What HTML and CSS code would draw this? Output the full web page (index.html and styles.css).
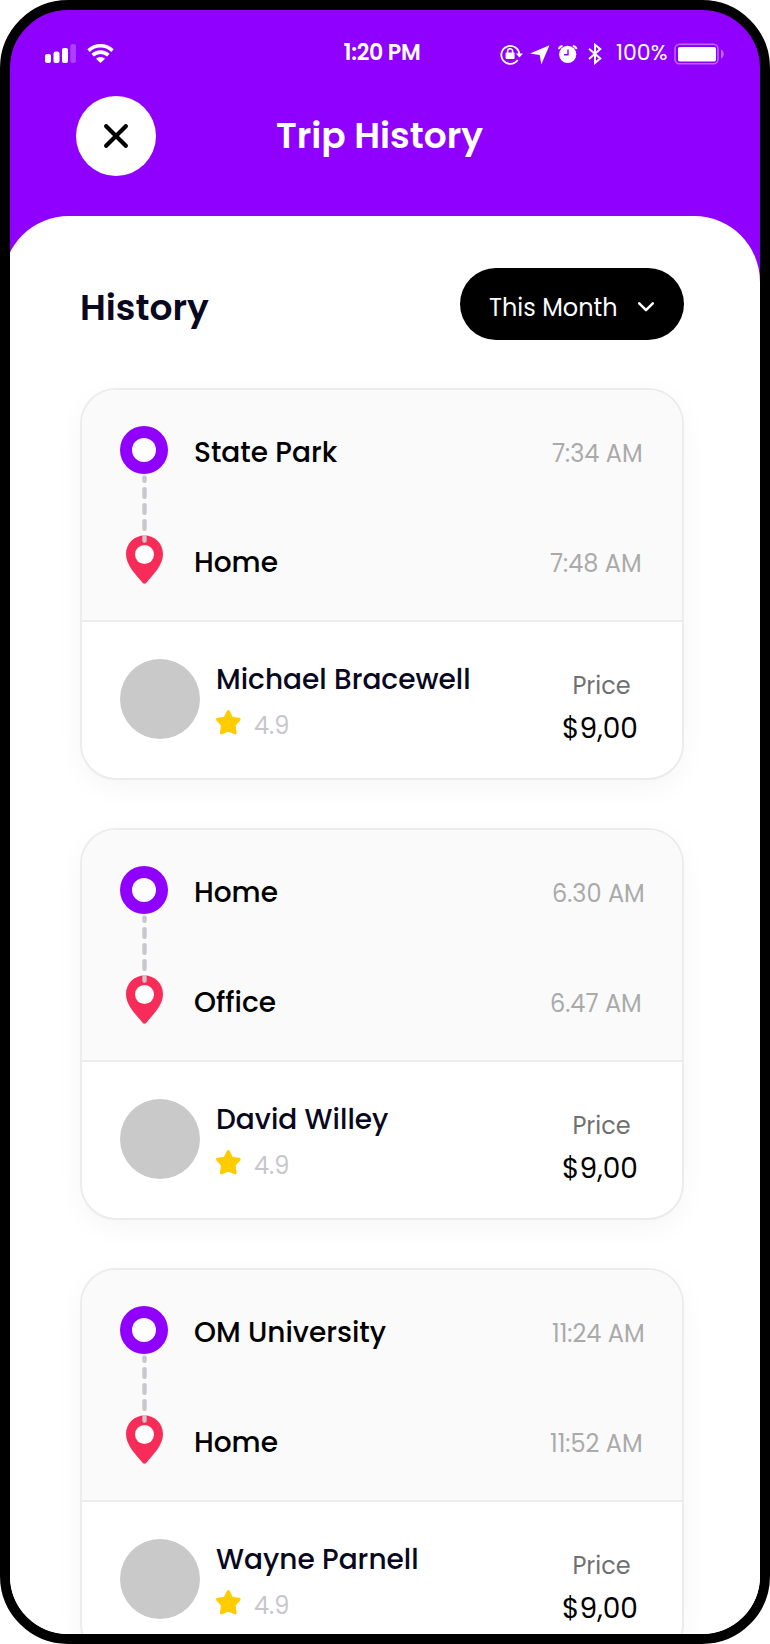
FILE: index.html
```html
<!DOCTYPE html>
<html lang="en">
<head>
<meta charset="utf-8">
<title>Trip History</title>
<link rel="stylesheet" href="styles.css">
</head>
<body>
<svg class="defs" width="0" height="0" aria-hidden="true">
  <symbol id="route" viewBox="0 0 48 158">
    <circle cx="24" cy="24" r="24" fill="#8f00ff"/>
    <circle cx="24" cy="24" r="12" fill="#fff"/>
    <path d="M24.500 109.500C14.300 109.500 6 117.600 6 128c0 11.500 9.500 20 16.600 28.700 1.100 1.400 2.700 1.400 3.800 0C33.500 148 43 139.500 43 128c0-10.400-8.300-18.500-18.500-18.500z" fill="#f82c58"/>
    <circle cx="24.500" cy="128.500" r="9.500" fill="#fff"/>
    <g fill="#c8c7cc">
      <rect x="22.300" y="49.500" width="4.400" height="7.500" rx="2"/>
      <rect x="22.300" y="61" width="4.400" height="12" rx="2"/>
      <rect x="22.300" y="77" width="4.400" height="12" rx="2"/>
      <rect x="22.300" y="93" width="4.400" height="12" rx="2"/>
      <rect x="22.300" y="109" width="4.400" height="7.700" rx="2"/>
    </g>
  </symbol>
  <symbol id="star" viewBox="0 0 25 25">
    <path d="M12.300 1.700L15.600 8.300L23 9.400L18 15L19 22.800L12.300 19.800L5.600 22.800L6.600 15L1.600 9.400L9 8.300Z" fill="#ffcc00" stroke="#ffcc00" stroke-width="3.200" stroke-linejoin="round"/>
  </symbol>
</svg>

<div class="phone">
  <div class="status">
    <div class="status-left">
      <svg width="31" height="20" viewBox="0 0 31 20" fill="#fff">
        <rect x="0" y="10" width="6" height="9" rx="2"/>
        <rect x="8.500" y="7.500" width="6" height="11.500" rx="2"/>
        <rect x="17" y="4" width="6" height="15" rx="2"/>
        <rect x="25.300" y="0" width="5.700" height="19" rx="2" opacity=".25"/>
      </svg>
      <svg width="27" height="20" viewBox="0 0 27 20" fill="none" stroke="#fff" stroke-width="3.600">
        <path d="M1.500 6.600C8.300 .2 18.700 .2 25.500 6.600"/>
        <path d="M5.600 11.200C10.300 7.100 16.700 7.100 21.400 11.200"/>
        <path d="M9 14.700C11.700 12.300 15.300 12.300 18 14.700L13.500 18.900Z" fill="#fff" stroke="none"/>
      </svg>
    </div>
    <div class="clock">1:20 PM</div>
    <div class="status-right">
      <svg class="status-icons" width="104" height="24" viewBox="0 0 104 24" fill="none" stroke="#fff">
        <path d="M17.700 18.100A9 9 0 1 1 19.300 12.300" stroke-width="1.800"/>
        <path d="M15.800 11.500H23L19.400 15.600Z" fill="#fff" stroke="none"/>
        <rect x="5.600" y="10.600" width="9" height="6.400" rx=".8" fill="#fff" stroke="none"/>
        <path d="M7.600 11V9.300a2.500 2.500 0 0 1 5 0V11" stroke-width="1.500"/>
        <path d="M30 11.500L49.500 3.200L41.300 22.500L39.700 12.900Z" fill="#fff" stroke="none"/>
        <circle cx="67.700" cy="12.300" r="8.600" fill="#fff" stroke="none"/>
        <path d="M68 7.500V12.800H64" stroke="#8f00ff" stroke-width="1.400"/>
        <path d="M58.900 7.200Q59.300 4.300 62.600 4M72.800 4Q76.100 4.300 76.500 7.200" stroke-width="1.800"/>
        <path d="M89 6.700L100.300 16.500L95 20.800V2.800L100.300 7.100L89 17" stroke-width="2"/>
      </svg>
      <span class="percent">100%</span>
      <svg class="battery" width="51" height="22" viewBox="0 0 51 22">
        <rect x="1" y="1.200" width="43" height="19.600" rx="4.500" fill="none" stroke="#fff" stroke-width="1.600" opacity=".4"/>
        <rect x="4" y="4" width="38" height="14.500" rx="1.800" fill="#fff"/>
        <path d="M47 6.500C50.700 7.700 50.700 14.300 47 15.500Z" fill="#fff" opacity=".4"/>
      </svg>
    </div>
  </div>

  <header class="titlebar">
    <button class="close" aria-label="Close">
      <svg width="24" height="24" viewBox="0 0 24 24" fill="none" stroke="#000" stroke-width="4.200" stroke-linecap="round"><path d="M2.200 2.200L21.800 21.800M21.800 2.200L2.200 21.800"/></svg>
    </button>
    <h1>Trip History</h1>
  </header>

  <main class="sheet">
    <div class="sheet-head">
      <h2>History</h2>
      <button class="filter">
        <span>This Month</span>
        <svg width="16" height="10" viewBox="0 0 16 10" fill="none" stroke="#fff" stroke-width="2.500" stroke-linecap="round" stroke-linejoin="round"><path d="M1.200 1.400L8 8.200L14.800 1.400"/></svg>
      </button>
    </div>

    <article class="card">
      <div class="trip">
        <svg class="route"><use href="#route"/></svg>
        <div class="stops">
          <div class="stop"><span class="place">State Park</span><span class="time">7:34 AM</span></div>
          <div class="stop"><span class="place">Home</span><span class="time">7:48 AM</span></div>
        </div>
      </div>
      <div class="driver">
        <div class="avatar"></div>
        <div class="who">
          <div class="name">Michael Bracewell</div>
          <div class="rating"><svg class="star"><use href="#star"/></svg><span>4.9</span></div>
        </div>
        <div class="price"><span class="label">Price</span><span class="amount">$9,00</span></div>
      </div>
    </article>

    <article class="card">
      <div class="trip">
        <svg class="route"><use href="#route"/></svg>
        <div class="stops">
          <div class="stop"><span class="place">Home</span><span class="time">6.30 AM</span></div>
          <div class="stop"><span class="place">Office</span><span class="time">6.47 AM</span></div>
        </div>
      </div>
      <div class="driver">
        <div class="avatar"></div>
        <div class="who">
          <div class="name">David Willey</div>
          <div class="rating"><svg class="star"><use href="#star"/></svg><span>4.9</span></div>
        </div>
        <div class="price"><span class="label">Price</span><span class="amount">$9,00</span></div>
      </div>
    </article>

    <article class="card">
      <div class="trip">
        <svg class="route"><use href="#route"/></svg>
        <div class="stops">
          <div class="stop"><span class="place">OM University</span><span class="time">11:24 AM</span></div>
          <div class="stop"><span class="place">Home</span><span class="time">11:52 AM</span></div>
        </div>
      </div>
      <div class="driver">
        <div class="avatar"></div>
        <div class="who">
          <div class="name">Wayne Parnell</div>
          <div class="rating"><svg class="star"><use href="#star"/></svg><span>4.9</span></div>
        </div>
        <div class="price"><span class="label">Price</span><span class="amount">$9,00</span></div>
      </div>
    </article>
  </main>
</div>
</body>
</html>
```
FILE: styles.css
```css
* { box-sizing: border-box; }
body { margin: 0; background: #fff; font-family: Poppins, Inter, "Open Sans", sans-serif; color: #000; }
svg { display: block; flex: none; }
h1, h2 { margin: 0; font-size: 36px; font-weight: 600; line-height: 48px; }
button { border: 0; padding: 0; font: inherit; }
.defs { position: absolute; }

.phone {
  width: 770px;
  height: 1644px;
  border: 10px solid #000;
  border-radius: 68px;
  background: linear-gradient(#8f00ff 400px, #fff 400px);
  overflow: hidden;
}

/* status bar */
.status { display: flex; align-items: center; height: 86px; padding: 0 35px; color: #fff; font-size: 22px; line-height: 30px; }
.status-left { display: flex; gap: 10.500px; width: 298.5px; padding-top: 2px; }
.clock { font-weight: 600; letter-spacing: -.3px; padding-bottom: 1px; }
.status-right { display: flex; align-items: center; margin-left: auto; }
.status-icons { margin-top: 1px; }
.percent { margin-left: 12px; width: 58px; padding-bottom: 1px; }
.battery { margin-top: 2px; }

/* title bar */
.titlebar { display: flex; align-items: center; height: 80px; padding-left: 66px; gap: 120px; color: #fff; }
.titlebar h1 { padding-bottom: 1px; }
.close { display: grid; place-items: center; width: 80px; height: 80px; border-radius: 50%; background: #fff; }

/* content sheet */
.sheet {
  display: flex;
  flex-direction: column;
  gap: 48px;
  height: 1520px;
  margin: 40px 0 0 -7px;
  padding: 52px 76px 0 77px;
  border-radius: 66px 66px 0 0;
  background: #fff;
}
.sheet-head { display: flex; justify-content: space-between; align-items: center; height: 72px; flex: none; }
.sheet-head h2 { padding-top: 7px; color: #080821; }
.filter { display: flex; align-items: center; gap: 20px; width: 224px; height: 72px; padding: 6px 0 0 29px; border-radius: 36px; background: #000; color: #fff; font-size: 24px; }

/* trip card */
.card { flex: none; height: 392px; border: 2px solid #ececec; border-radius: 36px; background: #fff; box-shadow: 0 8px 28px rgba(0, 0, 0, .04); overflow: hidden; }
.trip { display: flex; height: 232px; padding: 36px 0 0 38px; gap: 26px; border-bottom: 2px solid #ececec; background: #fafafa; }
.route { width: 48px; height: 158px; }
.stops { flex: 1; padding-top: 3px; }
.stop { display: flex; justify-content: space-between; align-items: baseline; height: 110px; line-height: 48px; }
.place { font-size: 28px; font-weight: 500; }
.time { width: 130px; color: #aaa; font-size: 24px; }
.stop:last-child .time { width: 132px; }

.driver { display: flex; height: 156px; padding: 36.5px 32px 0 38px; gap: 16px; }
.avatar { width: 80px; height: 80px; border-radius: 50%; background: #c9c9c9; }
.who { flex: 1; }
.name { margin-top: -2.5px; color: #080821; font-size: 28px; font-weight: 500; line-height: 48px; }
.rating { display: flex; align-items: flex-start; gap: 13px; padding-top: 6px; color: #c8c7cc; font-size: 24px; line-height: 32px; }
.star { width: 25px; height: 25px; }
.price { display: flex; flex-direction: column; align-items: center; width: 100px; padding-top: 7.5px; }
.label { padding-left: 3px; color: #707070; font-size: 24px; line-height: 40px; }
.amount { font-size: 28px; line-height: 46px; }
```
